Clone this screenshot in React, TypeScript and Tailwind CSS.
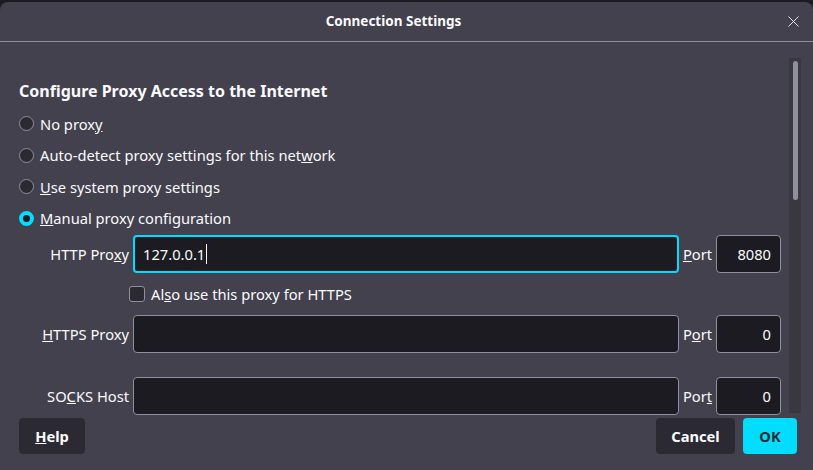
import { X } from "lucide-react";

const font = { fontFamily: '"Noto Sans", "Open Sans", sans-serif' };

const Radio = ({ checked, children }: { checked?: boolean; children: React.ReactNode }) => (
  <div className="flex h-[31.5px] items-center gap-[6px]">
    {checked ? (
      <span className="h-[15px] w-[15px] rounded-full border-[4px] border-[#00ddff] bg-[#1c1b22]" />
    ) : (
      <span className="h-[15px] w-[15px] rounded-full border border-[#8f8f9d] bg-[#2b2a33]" />
    )}
    <span>{children}</span>
  </div>
);

const Field = ({
  label,
  port,
  value,
  portValue,
  focused,
}: {
  label: React.ReactNode;
  port: React.ReactNode;
  value?: string;
  portValue: string;
  focused?: boolean;
}) => (
  <div className="flex h-[38px] items-center">
    <span className="w-[114px] pr-[4px] text-right">{label}</span>
    <div
      className={
        focused
          ? "flex h-[38px] flex-1 items-center rounded-[4px] border-2 border-[#00ddff] bg-[#1c1b22] px-[8px]"
          : "flex h-[38px] flex-1 items-center rounded-[4px] border border-[#8f8f9d] bg-[#1c1b22] px-[9px]"
      }
    >
      {value}
      {focused && <span className="ml-[1px] h-[20px] w-px bg-[#fbfbfe]" />}
    </div>
    <span className="w-[37px] text-center">{port}</span>
    <div className="flex h-[38px] w-[65px] items-center justify-end rounded-[4px] border border-[#8f8f9d] bg-[#1c1b22] px-[9px]">
      {portValue}
    </div>
  </div>
);

export default function App() {
  return (
    <div className="h-[470px] w-[813px] overflow-hidden bg-[#1c1b22]" style={font}>
      <div className="mt-[2px] flex h-[468px] flex-col rounded-t-[8px] bg-[#42414d] text-[14.7px] text-[#fbfbfe]">
        <div className="flex h-[40px] items-center border-b border-[#8f8f9d]">
          <div className="flex-1 text-center text-[13.5px] font-bold">Connection Settings</div>
          <div className="flex w-[26px] items-center justify-start">
            <X className="h-[19px] w-[19px] -translate-x-[3px]" strokeWidth={1.1} />
          </div>
        </div>
        <div className="flex h-[373px] overflow-hidden">
          <div className="flex-1 pl-[19px] pr-[8px] pt-[37px]">
            <h2 className="h-[24px] text-[16px] font-bold leading-[24px]">Configure Proxy Access to the Internet</h2>
            <div className="mt-[5px] flex flex-col">
              <Radio>
                No prox<u>y</u>
              </Radio>
              <Radio>
                Auto-detect proxy settings for this net<u>w</u>ork
              </Radio>
              <Radio>
                <u>U</u>se system proxy settings
              </Radio>
              <Radio checked>
                <u>M</u>anual proxy configuration
              </Radio>
            </div>
            <div className="mt-[1px] flex flex-col">
              <Field
                focused
                value="127.0.0.1"
                portValue="8080"
                label={
                  <>
                    HTTP Pro<u>x</u>y
                  </>
                }
                port={
                  <>
                    <u>P</u>ort
                  </>
                }
              />
              <div className="mt-[7px] flex h-[28px] items-center gap-[6px] pl-[110px]">
                <span className="h-[16px] w-[16px] rounded-[3px] border border-[#8f8f9d] bg-[#2b2a33]" />
                <span>
                  Al<u>s</u>o use this proxy for HTTPS
                </span>
              </div>
              <div className="mt-[7px]">
                <Field
                  portValue="0"
                  label={
                    <>
                      <u>H</u>TTPS Proxy
                    </>
                  }
                  port={
                    <>
                      P<u>o</u>rt
                    </>
                  }
                />
              </div>
              <div className="mt-[24px]">
                <Field
                  portValue="0"
                  label={
                    <>
                      SO<u>C</u>KS Host
                    </>
                  }
                  port={
                    <>
                      Por<u>t</u>
                    </>
                  }
                />
              </div>
            </div>
          </div>
          <div className="mr-[12px] mt-[16px] mb-[2px] flex w-[12px] justify-center bg-[#393841] pt-[3px]">
            <div className="h-[139px] w-[5px] rounded-full bg-[#8f8f9d]" />
          </div>
        </div>
        <div className="mt-[3px] flex items-start px-[16px] pl-[19px]">
          <button className="h-[36px] w-[66px] rounded-[4px] bg-[#2b2a33] font-bold">
            <u>H</u>elp
          </button>
          <div className="flex-1" />
          <button className="h-[36px] w-[79px] rounded-[4px] bg-[#2b2a33] font-bold">Cancel</button>
          <button className="ml-[8px] h-[36px] w-[54px] rounded-[4px] bg-[#00ddff] font-bold text-[#2b2a33]">
            OK
          </button>
        </div>
      </div>
    </div>
  );
}
